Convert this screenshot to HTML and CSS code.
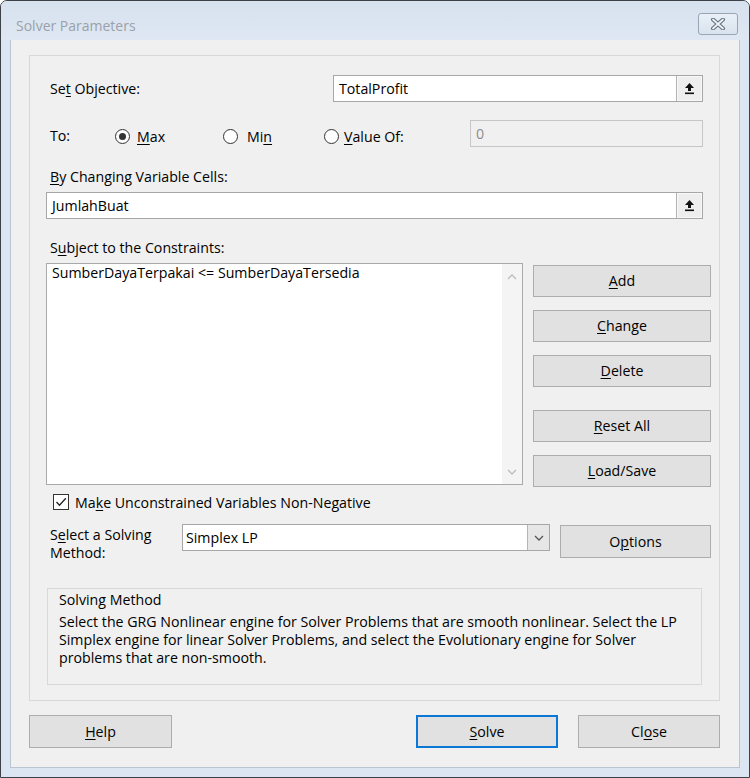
FILE: index.html
```html
<!DOCTYPE html>
<html>
<head>
<meta charset="utf-8">
<title>Solver Parameters</title>
<link rel="stylesheet" href="styles.css">
</head>
<body>
<div class="window">
  <div class="titlebar">
    <span class="title">Solver Parameters</span>
    <span class="close-btn">
      <svg width="18" height="12" viewBox="0 0 18 12">
        <path d="M4 1.5 L14 10.5 M14 1.5 L4 10.5" stroke="#65717e" stroke-width="4" stroke-linecap="round" fill="none"/>
        <path d="M4 1.5 L14 10.5 M14 1.5 L4 10.5" stroke="#eef2f6" stroke-width="1.8" stroke-linecap="round" fill="none"/>
      </svg>
    </span>
  </div>
  <div class="client">
    <div class="group">
      <div class="row row-objective">
        <span class="lbl lbl-objective">Se<u>t</u> Objective:</span>
        <div class="field field-objective">
          <span class="ftext">TotalProfit</span>
          <span class="refbtn">
            <svg width="11" height="13" viewBox="0 0 11 13"><path d="M5.5 1 L10 6 L7 6 L7 9 L4 9 L4 6 L1 6 Z" fill="#111"/><rect x="1" y="10.5" width="9" height="1.6" fill="#111"/></svg>
          </span>
        </div>
      </div>
      <div class="row row-to">
        <span class="lbl lbl-to">To:</span>
        <span class="opt opt-max"><span class="radio checked"></span><span><u>M</u>ax</span></span>
        <span class="opt opt-min"><span class="radio"></span><span>Mi<u>n</u></span></span>
        <span class="opt opt-value"><span class="radio"></span><span><u>V</u>alue Of:</span></span>
        <div class="field field-value disabled"><span class="ftext">0</span></div>
      </div>
      <div class="lbl lbl-block lbl-changing"><u>B</u>y Changing Variable Cells:</div>
      <div class="field field-changing">
        <span class="ftext">JumlahBuat</span>
        <span class="refbtn">
          <svg width="11" height="13" viewBox="0 0 11 13"><path d="M5.5 1 L10 6 L7 6 L7 9 L4 9 L4 6 L1 6 Z" fill="#111"/><rect x="1" y="10.5" width="9" height="1.6" fill="#111"/></svg>
        </span>
      </div>
      <div class="lbl lbl-block lbl-subject">S<u>u</u>bject to the Constraints:</div>
      <div class="constraints">
        <div class="listbox">
          <div class="listcontent">
            <div class="listitem">SumberDayaTerpakai &lt;= SumberDayaTersedia</div>
          </div>
          <div class="scrollbar">
            <span class="sarrow"><svg width="10" height="6" viewBox="0 0 10 6"><path d="M1 5 L5 1 L9 5" stroke="#bdbdbd" stroke-width="1.3" fill="none"/></svg></span>
            <span class="sarrow"><svg width="10" height="6" viewBox="0 0 10 6"><path d="M1 1 L5 5 L9 1" stroke="#bdbdbd" stroke-width="1.3" fill="none"/></svg></span>
          </div>
        </div>
        <div class="btncol">
          <span class="btn btn-add"><u>A</u>dd</span>
          <span class="btn btn-change"><u>C</u>hange</span>
          <span class="btn btn-delete"><u>D</u>elete</span>
          <span class="btn btn-reset"><u>R</u>eset All</span>
          <span class="btn btn-load"><u>L</u>oad/Save</span>
        </div>
      </div>
      <div class="check-row">
        <span class="checkbox">
          <svg width="14" height="14" viewBox="0 0 14 14"><path d="M2.5 7 L5.5 10.2 L11.8 3.2" stroke="#222" stroke-width="1.3" fill="none"/></svg>
        </span>
        <span>Ma<u>k</u>e Unconstrained Variables Non-Negative</span>
      </div>
      <div class="method-row">
        <div class="lbl lbl-method">S<u>e</u>lect a Solving<br>Method:</div>
        <div class="combo">
          <span class="ftext">Simplex LP</span>
          <span class="dropbtn"><svg width="10" height="6" viewBox="0 0 10 6"><path d="M1 1 L5 5 L9 1" stroke="#555" stroke-width="1.3" fill="none"/></svg></span>
        </div>
        <span class="btn btn-options">O<u>p</u>tions</span>
      </div>
      <div class="infobox">
        <div class="info-title">Solving Method</div>
        <div class="info-text">
          <div class="info-line">Select the GRG Nonlinear engine for Solver Problems that are smooth nonlinear. Select the LP</div>
          <div class="info-line">Simplex engine for linear Solver Problems, and select the Evolutionary engine for Solver</div>
          <div class="info-line">problems that are non-smooth.</div>
        </div>
      </div>
    </div>
    <div class="footer">
      <span class="btn btn-help"><u>H</u>elp</span>
      <span class="btn btn-solve"><u>S</u>olve</span>
      <span class="btn btn-close">Cl<u>o</u>se</span>
    </div>
  </div>
</div>
</body>
</html>
```
FILE: styles.css
```css
* { box-sizing: border-box; }
html, body { margin: 0; padding: 0; }
body {
  width: 750px;
  height: 778px;
  overflow: hidden;
  background: #ffffff;
  font-family: "Open Sans", "Noto Sans", sans-serif;
  font-size: 14.2px;
  color: #000;
}
u { text-decoration: underline; text-decoration-thickness: 1px; text-underline-offset: 2px; }

.window {
  width: 750px;
  height: 778px;
  border: 1px solid #3d4148;
  border-radius: 7px 7px 0 0;
  background: #dce6f2;
  padding: 0 9px 9px 9px;
  display: flex;
  flex-direction: column;
}

.titlebar {
  height: 39px;
  margin: 0 -9px;
  padding: 0 11px 0 15px;
  display: flex;
  justify-content: space-between;
  align-items: flex-start;
  background: linear-gradient(#d7e2ef, #dee7f2);
  border-radius: 6px 6px 0 0;
}
.title {
  margin-top: 15px;
  font-size: 14px;
  line-height: 20px;
  color: #9aa1a9;
}
.close-btn {
  margin-top: 12px;
  width: 40px;
  height: 22px;
  border: 1px solid #97a5b6;
  border-radius: 3px;
  background: linear-gradient(#e9f0f7, #d9e3ee);
  display: flex;
  align-items: center;
  justify-content: center;
}

.client {
  flex: 1;
  background: #f0f0f0;
  border: 1px solid #b9c5d3;
  border-top: none;
  padding: 15px 0 0 18px;
}

.group {
  width: 691px;
  height: 646px;
  border: 1px solid #d8d8d8;
  padding: 19px 8px 0 16px;
}

.row { display: flex; align-items: center; height: 27px; }
.lbl { padding-left: 4px; line-height: 20px; }
.lbl-objective { width: 287px; }
.row-to { margin-top: 18px; }
.lbl-to { width: 69px; margin-top: 5px; }
.opt { display: flex; align-items: center; gap: 7px; margin-top: 5px; }
.opt-max { width: 108px; }
.opt-min { width: 101px; gap: 9px; }
.opt-value { width: 146px; gap: 5px; }

.radio {
  width: 15px;
  height: 15px;
  border: 1px solid #333;
  border-radius: 50%;
  background: #fff;
  display: flex;
  align-items: center;
  justify-content: center;
}
.radio.checked::after {
  content: "";
  width: 7px;
  height: 7px;
  border-radius: 50%;
  background: #333;
}

.field {
  height: 27px;
  border: 1px solid #a7a7a7;
  background: #fff;
  display: flex;
  align-items: stretch;
}
.ftext { flex: 1; padding-left: 5px; line-height: 25px; }
.field-objective { width: 370px; }
.field-value { width: 233px; }
.field.disabled { background: #f0f0f0; border-color: #c6c6c6; color: #8d8d8d; }
.field-changing { width: 657px; margin-top: 5px; }
.refbtn {
  width: 26px;
  background: #eeeeee;
  border-left: 1px solid #b3b3b3;
  box-shadow: inset 0 0 0 1px #f8f8f8;
  display: flex;
  align-items: center;
  justify-content: center;
}

.lbl-block { display: block; }
.lbl-changing { margin-top: 20px; }
.lbl-subject { margin-top: 19px; }

.constraints {
  margin-top: 5px;
  display: flex;
  gap: 10px;
}
.listbox {
  width: 477px;
  height: 222px;
  border: 1px solid #a9a9a9;
  background: #fff;
  display: flex;
}
.listcontent { flex: 1; padding-left: 5px; }
.listitem { line-height: 18px; }
.scrollbar {
  width: 20px;
  background: #f4f4f4;
  display: flex;
  flex-direction: column;
  justify-content: space-between;
}
.sarrow {
  height: 25px;
  display: flex;
  align-items: center;
  justify-content: center;
}

.btncol {
  width: 178px;
  padding-top: 2px;
  display: flex;
  flex-direction: column;
}
.btn {
  display: flex;
  align-items: center;
  justify-content: center;
  height: 32px;
  background: #e1e1e1;
  border: 1px solid #adadad;
  line-height: 20px;
}
.btn-change, .btn-delete, .btn-load { margin-top: 13px; }
.btn-reset { margin-top: 23px; }

.check-row {
  margin-top: 5px;
  height: 20px;
  display: flex;
  align-items: center;
  gap: 6px;
  padding-left: 7px;
}
.checkbox {
  width: 16px;
  height: 16px;
  border: 1px solid #333;
  background: #fff;
  display: flex;
  align-items: center;
  justify-content: center;
}

.method-row {
  margin-top: 12px;
  height: 34px;
  display: flex;
  align-items: flex-start;
}
.lbl-method { width: 136px; padding-top: 2px; line-height: 18px; }
.combo {
  width: 368px;
  height: 27px;
  border: 1px solid #a7a7a7;
  background: #fff;
  display: flex;
  align-items: stretch;
}
.combo .ftext { padding-left: 3px; }
.dropbtn {
  width: 22px;
  background: #e6e6e6;
  border-left: 1px solid #b5b5b5;
  display: flex;
  align-items: center;
  justify-content: center;
}
.btn-options { width: 151px; height: 33px; margin-left: 10px; margin-top: 1px; }

.infobox {
  margin-top: 30px;
  margin-left: 1px;
  width: 655px;
  height: 97px;
  border: 1px solid #d8d8d8;
  padding: 1px 10px 0 11px;
}
.info-title { line-height: 20px; }
.info-text { margin-top: 3px; white-space: nowrap; }
.info-line { height: 18px; line-height: 18px; }

.footer {
  margin-top: 14px;
  padding-right: 19px;
  display: flex;
}
.footer .btn { height: 33px; }
.btn-help { width: 143px; }
.btn-solve { width: 142px; margin-left: auto; border: 2px solid #0a78d4; }
.btn-close { width: 142px; margin-left: 20px; }
```
